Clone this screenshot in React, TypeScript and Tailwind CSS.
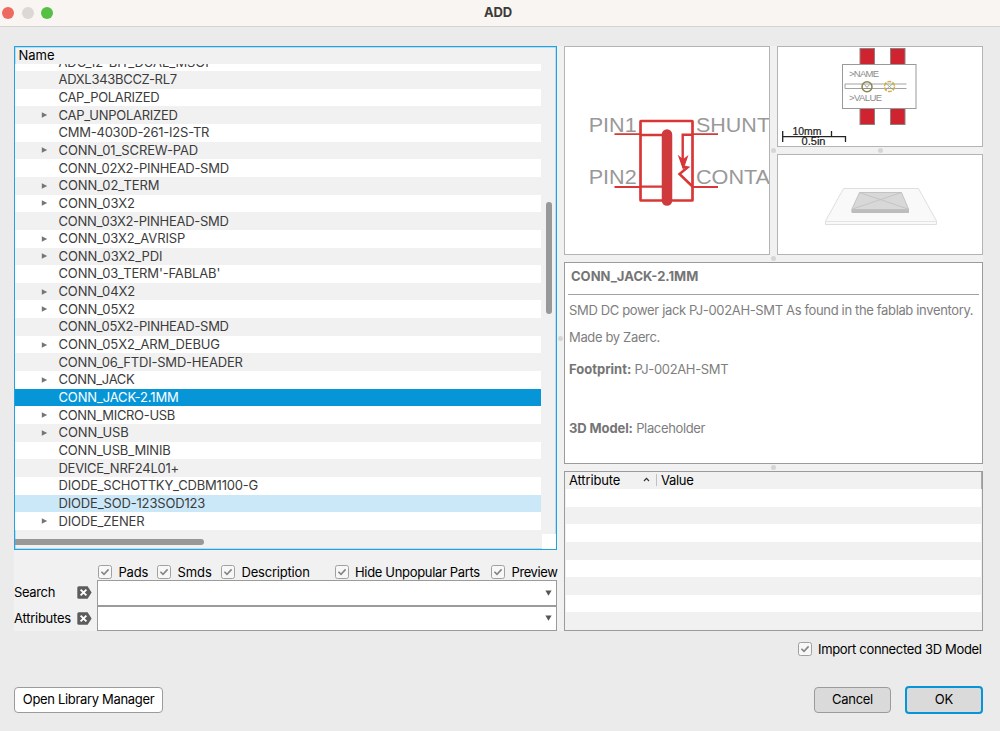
import React from "react";

type Part = { name: string; tracking: number; expandable?: boolean; state?: "selected" | "hover" };

const parts: Part[] = [
  { name: "ADC_12-BIT_DUAL_MSOP", tracking: -0.1 },
  { name: "ADXL343BCCZ-RL7", tracking: -0.3 },
  { name: "CAP_POLARIZED", tracking: -0.3 },
  { name: "CAP_UNPOLARIZED", tracking: -0.27, expandable: true },
  { name: "CMM-4030D-261-I2S-TR", tracking: -0.24 },
  { name: "CONN_01_SCREW-PAD", tracking: -0.12, expandable: true },
  { name: "CONN_02X2-PINHEAD-SMD", tracking: -0.28 },
  { name: "CONN_02_TERM", tracking: -0.1, expandable: true },
  { name: "CONN_03X2", tracking: -0.1, expandable: true },
  { name: "CONN_03X2-PINHEAD-SMD", tracking: -0.28 },
  { name: "CONN_03X2_AVRISP", tracking: -0.12, expandable: true },
  { name: "CONN_03X2_PDI", tracking: -0.05, expandable: true },
  { name: "CONN_03_TERM'-FABLAB'", tracking: -0.14 },
  { name: "CONN_04X2", tracking: -0.15, expandable: true },
  { name: "CONN_05X2", tracking: -0.1, expandable: true },
  { name: "CONN_05X2-PINHEAD-SMD", tracking: -0.28 },
  { name: "CONN_05X2_ARM_DEBUG", tracking: -0.12, expandable: true },
  { name: "CONN_06_FTDI-SMD-HEADER", tracking: -0.2 },
  { name: "CONN_JACK", tracking: -0.33, expandable: true },
  { name: "CONN_JACK-2.1MM", tracking: -0.15, state: "selected" },
  { name: "CONN_MICRO-USB", tracking: -0.32, expandable: true },
  { name: "CONN_USB", tracking: -0.1, expandable: true },
  { name: "CONN_USB_MINIB", tracking: -0.16 },
  { name: "DEVICE_NRF24L01+", tracking: -0.28 },
  { name: "DIODE_SCHOTTKY_CDBM1100-G", tracking: -0.2 },
  { name: "DIODE_SOD-123SOD123", tracking: -0.16, state: "hover" },
  { name: "DIODE_ZENER", tracking: -0.18, expandable: true },
];

function rowColors(part: Part, index: number) {
  if (part.state === "selected") return "bg-[#0696d7] text-white";
  if (part.state === "hover") return "bg-[#cbe8f8] text-[#3c3c3c]";
  return index % 2 ? "bg-[#f1f1f1] text-[#3c3c3c]" : "bg-white text-[#3c3c3c]";
}

function TitleBar() {
  return (
    <header className="relative flex h-[27px] shrink-0 items-center border-b border-[#d5d3d1] bg-[#f8f5f2]">
      <div className="flex gap-[7.5px] pl-[2px]">
        <i className="size-3 rounded-full bg-[#ee6a5f]" />
        <i className="size-3 rounded-full bg-[#dbd8d6]" />
        <i className="size-3 rounded-full bg-[#55c043]" />
      </div>
      <h1 className="absolute left-[484px] top-[4px] text-[13px] leading-4 font-bold tracking-[-0.2px] text-[#3d3a38]">ADD</h1>
    </header>
  );
}

function PartList() {
  return (
    <section className="relative flex h-[504px] flex-col border border-[#22a3df] bg-[#f1f1f1] shadow-[inset_0_0_0_0.5px_#7fcbf0]">
      <div className="h-[17px] shrink-0 pl-[3.500px] text-[13px] leading-[17px] text-black">Name</div>
      <div className="flex h-[466px] w-[526px] shrink-0 flex-col justify-end overflow-hidden">
        {parts.map((p, i) => (
          <div key={p.name} className={`flex h-[17.66px] shrink-0 items-center pb-px text-[13px] ${rowColors(p, i)}`}>
            <span className="flex w-[43.5px] shrink-0 justify-start pt-px pl-[26px]">
              {p.expandable && (
                <svg width="7" height="6" viewBox="0 0 7 6">
                  <path d="M0.8 0.2 6.2 3 0.8 5.8Z" fill="#757575" />
                </svg>
              )}
            </span>
            <span className="whitespace-nowrap leading-4" style={{ letterSpacing: p.tracking }}>{p.name}</span>
          </div>
        ))}
      </div>
      <div className="flex grow items-end justify-between">
        <div className="mb-[4.5px] h-[6px] w-[189px] rounded-r-full bg-[#989898]" />
        <div className="h-[15px] w-[14px] bg-white" />
      </div>
      <div className="absolute left-[531px] top-[155px] h-[112px] w-[6px] rounded-full bg-[#989898]" />
    </section>
  );
}

function Check({ label, className = "" }: { label: string; className?: string }) {
  return (
    <label className={`flex shrink-0 items-center gap-[6.5px] whitespace-nowrap text-[13px] leading-4 text-black ${className}`}>
      <span className="flex size-[14px] shrink-0 items-center justify-center rounded-[2.5px] border border-[#a0a0a0] bg-[#f7f7f7]">
        <svg width="10" height="8" viewBox="0 0 10 8">
          <path d="M1.4 3.7 4 6.3 8.6 1.4" fill="none" stroke="#858585" strokeWidth="1.6" />
        </svg>
      </span>
      {label}
    </label>
  );
}

function FilterRow({ label, className = "" }: { label: string; className?: string }) {
  return (
    <div className="flex h-[25.5px] items-center text-[13px] text-black">
      <span className={`w-[63px] whitespace-nowrap ${className}`}>{label}</span>
      <svg className="shrink-0" width="15" height="13" viewBox="0 0 15 13">
        <path d="M1.8 0.3H10.6L14.6 6.5 10.6 12.7H1.8Q0.3 12.7 0.3 11.2V1.8Q0.3 0.3 1.8 0.3Z" fill="#5c5c5c" />
        <path d="M3.6 3.6 9.4 9.4M9.4 3.6 3.6 9.4" stroke="white" strokeWidth="1.9" />
      </svg>
      <div className="ml-[5px] flex h-full grow items-center justify-end border border-[#9b9b9b] bg-white pr-[4.5px]">
        <svg width="7" height="6" viewBox="0 0 7 6">
          <path d="M0.4 0.4H6.6L3.5 5.8Z" fill="#555" />
        </svg>
      </div>
    </div>
  );
}

function Schematic() {
  return (
    <div className="h-[209px] w-[206px] border border-[#b4b4b4] bg-white">
      <svg width="204" height="207" viewBox="565 47 204 207" fill="none" stroke="#d93636">
        <g fill="#999" stroke="none" fontFamily="Liberation Sans" fontSize="20.5">
          <text x="588.7" y="131.5" textLength="48" lengthAdjust="spacingAndGlyphs">PIN1</text>
          <text x="588.7" y="183.5" textLength="48" lengthAdjust="spacingAndGlyphs">PIN2</text>
          <text x="696" y="131.5" textLength="74" lengthAdjust="spacingAndGlyphs">SHUNT</text>
          <text x="696" y="183.5" textLength="74" lengthAdjust="spacingAndGlyphs">CONTA</text>
        </g>
        <rect x="640.5" y="121" width="52" height="79.5" strokeWidth="2.7" rx="0.5" />
        <path d="M614.5 134.2H641M614.5 187H641M693 134.2H718M693 187H718" strokeWidth="1.8" />
        <path d="M641 135H662M641 186.6H662" strokeWidth="2.4" />
        <path d="M667 134.5V200.500" strokeWidth="10.5" strokeLinecap="round" stroke="#cf3a3c" />
        <path d="M692 134.8H682.7V165" strokeWidth="2.4" />
        <path d="M679.3 157 683.2 168 687 157 683 160Z" fill="#d93636" strokeWidth="1.5" />
        <path d="M682.5 166.500 687.500 167.500 679.500 174 692.500 186.500" strokeWidth="2.5" />
      </svg>
    </div>
  );
}

function Footprint() {
  return (
    <div className="h-[101px] w-[206px] border border-[#b4b4b4] bg-white">
      <svg width="204" height="99" viewBox="778 47 204 99" fill="none">
        <g fill="#cf2430" stroke="#8f8181" strokeWidth="1">
          <rect x="860" y="48.5" width="14.5" height="16" />
          <rect x="890.5" y="48.5" width="14.5" height="16" />
          <rect x="860" y="108.5" width="14.5" height="16" />
          <rect x="890.5" y="108.5" width="14.5" height="16" />
        </g>
        <rect x="842.5" y="64.5" width="73.5" height="44" fill="white" stroke="#999" />
        <g fill="#8b8b8b" fontFamily="Liberation Sans" fontSize="9.5">
          <text x="849" y="76.5" textLength="30">&gt;NAME</text>
          <text x="849" y="101" textLength="33">&gt;VALUE</text>
        </g>
        <path d="M906.5 84H845V88.5H906.5" stroke="#999" strokeWidth="0.9" />
        <circle cx="867" cy="86.7" r="5" stroke="#8c8450" strokeWidth="1.5" />
        <path d="M864.5 84.5 867 87.500 869.500 84.500M864 88.500H870" stroke="#888" strokeWidth="0.8" />
        <circle cx="889.5" cy="86.5" r="5" stroke="#d1b345" strokeWidth="1.5" strokeDasharray="4 1.2" />
        <path d="M885.5 83 893.5 90M893.5 83 885.5 90" stroke="#999" strokeWidth="0.8" />
        <path d="M782.7 131V142M782.7 136.700H845.500V142M831.500 131V137" stroke="#222" strokeWidth="1.3" />
        <g fill="#222" fontFamily="Liberation Sans" fontSize="10" stroke="#222" strokeWidth="0.2">
          <text x="792.5" y="135.300" textLength="29" lengthAdjust="spacingAndGlyphs">10mm</text>
          <text x="801.500" y="145.300" textLength="24" lengthAdjust="spacingAndGlyphs">0.5in</text>
        </g>
      </svg>
    </div>
  );
}

function Model() {
  return (
    <div className="h-[101px] w-[206px] border border-[#b4b4b4] bg-white">
      <svg width="204" height="99" viewBox="778 155 204 99" strokeLinejoin="round">
        <path d="M843.5 188.5H918.5L936.5 221V224.500H825.500V221Z" fill="#f9f9f9" stroke="#dfdfdf" />
        <path d="M825.5 221.5H936.5" stroke="#e4e4e4" />
        <path d="M859.5 192.5H901.5L908.5 209V212.500H852V209Z" fill="#d8d8d8" stroke="#c3c3c3" />
        <path d="M852 209.5H908.5V212.500H852Z" fill="#bdbdbd" stroke="#b8b8b8" strokeWidth="0.6" />
        <path d="M859.5 192.5 908 209M901.5 192.5 852.5 209" stroke="#bfbfbf" strokeWidth="0.8" />
      </svg>
    </div>
  );
}

function InfoPanel() {
  return (
    <article className="flex h-[202px] w-[419px] flex-col border border-[#9b9b9b] bg-white px-[3px] text-[13px] leading-4 text-[#7e7e7e]">
      <h2 className="mt-[5px] pl-[3px] font-bold text-[#757575]">CONN_JACK-2.1MM</h2>
      <hr className="mt-[10px] border-[#a3a3a3]" />
      <div className="whitespace-nowrap pl-px tracking-[-0.35px]">
        <p className="mt-[7px]">SMD DC power jack PJ-002AH-SMT As found in the fablab inventory.</p>
        <p className="mt-[11px]">Made by Zaerc.</p>
        <p className="mt-[16px]"><b className="tracking-normal text-[#757575]">Footprint:</b> PJ-002AH-SMT</p>
        <p className="mt-[43px]"><b className="tracking-[-0.1px] text-[#757575]">3D Model:</b> Placeholder</p>
      </div>
    </article>
  );
}

function AttributeTable() {
  return (
    <div className="flex h-[160px] w-[419px] flex-col border border-[#9b9b9b] bg-[#f1f1f1] text-[13px] leading-4 text-black">
      <div className="flex h-[17px] shrink-0 items-center border-r border-[#aaa] pb-[2px]">
        <span className="w-[78px] pl-1 tracking-[-0.15px]">Attribute</span>
        <svg className="mr-[6px]" width="7" height="5" viewBox="0 0 7 5">
          <path d="M1 4 3.5 1.3 6 4" fill="none" stroke="#333" strokeWidth="1.2" />
        </svg>
        <span className="h-3 w-px bg-[#c0c0c0]" />
        <span className="pl-[4px] tracking-[-0.3px]">Value</span>
      </div>
      {[0, 1, 2, 3, 4, 5, 6, 7].map((i) => (
        <div key={i} className={i % 2 ? "mx-px flex-1 bg-[#f1f1f1]" : "mx-px flex-1 bg-white"} />
      ))}
    </div>
  );
}

function Grip({ className = "" }: { className?: string }) {
  return <i className={`size-[5px] shrink-0 rounded-full bg-[#d5d5d5] ${className}`} />;
}

export default function App() {
  return (
    <div className="flex h-[731px] w-[1000px] flex-col overflow-hidden bg-[#ebebeb] font-['Inter','Liberation_Sans',sans-serif]">
      <TitleBar />
      <main className="ml-[14px] mt-[19px] flex h-[585px] w-[969px] shrink-0 bg-[#f1f1f1]">
        <div className="flex w-[543px] shrink-0 flex-col">
          <PartList />
          <div className="mt-[14.5px] flex h-[15px] items-center pl-[84px]">
            <Check label="Pads" className="w-[59px] tracking-[-0.2px]" />
            <Check label="Smds" className="w-[64px] tracking-[-0.1px]" />
            <Check label="Description" className="w-[113.5px] tracking-[-0.2px]" />
            <Check label="Hide Unpopular Parts" className="w-[156.5px] tracking-[-0.33px]" />
            <Check label="Preview" className="tracking-[-0.4px]" />
          </div>
          <div className="mt-[0.5px]">
            <FilterRow label="Search" className="tracking-[-0.35px]" />
            <FilterRow label="Attributes" className="tracking-[-0.25px]" />
          </div>
        </div>
        <div className="flex w-[7px] shrink-0 items-center justify-center">
          <Grip />
        </div>
        <div className="flex w-[419px] shrink-0 flex-col">
          <div className="flex h-[209px]">
            <Schematic />
            <div className="flex w-[7px] items-center justify-center">
              <Grip />
            </div>
            <div>
              <Footprint />
              <div className="flex h-[7px] items-center justify-center">
                <Grip />
              </div>
              <Model />
            </div>
          </div>
          <div className="flex h-[7px] items-center justify-center">
            <Grip />
          </div>
          <InfoPanel />
          <div className="flex h-[7px] items-center justify-center">
            <Grip />
          </div>
          <AttributeTable />
        </div>
      </main>
      <div className="mt-[10px] flex h-4 justify-end pr-[17px]">
        <Check label="Import connected 3D Model" className="w-[185.5px] tracking-[-0.33px]" />
      </div>
      <footer className="mt-[28px] flex h-[30px] items-center pl-[14px] pr-[17px] text-[13px] text-black">
        <button className="h-[26px] w-[149px] whitespace-nowrap rounded-[4px] border border-[#9b9b9b] bg-white tracking-[-0.33px]">Open Library Manager</button>
        <button className="ml-auto h-[26px] w-[77px] rounded-[4px] border border-[#9b9b9b] bg-[#dadada] tracking-[-0.3px]">Cancel</button>
        <button className="ml-[14px] h-[28px] w-[78px] rounded-[4px] border-2 border-[#0696d7] bg-[#dadada]">OK</button>
      </footer>
    </div>
  );
}
